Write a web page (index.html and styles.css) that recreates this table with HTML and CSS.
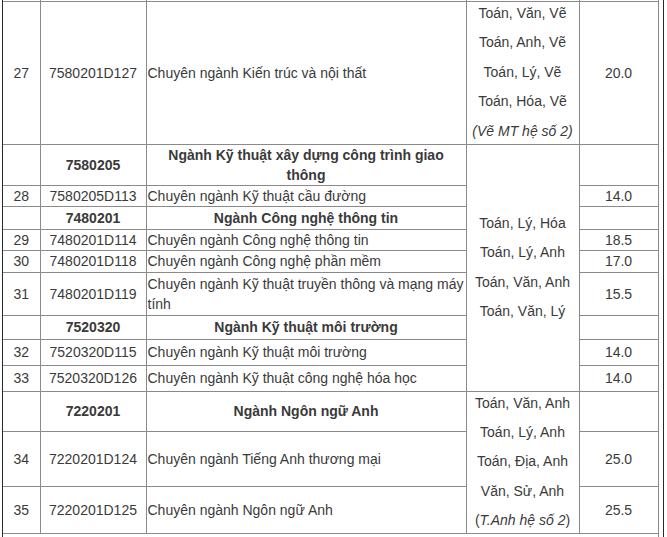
FILE: index.html
```html
<!DOCTYPE html>
<html lang="vi">
<head>
<meta charset="utf-8">
<title>Bảng điểm chuẩn</title>
<link rel="stylesheet" href="styles.css">
</head>
<body>
<div class="frame">
<table class="scores">
  <colgroup>
    <col class="c-stt"><col class="c-code"><col class="c-name"><col class="c-subj"><col class="c-score">
  </colgroup>
  <tr class="cut"><td></td><td></td><td></td><td></td><td></td></tr>
  <tr class="h143">
    <td class="ctr">27</td><td class="ctr">7580201D127</td><td class="name">Chuyên ngành Kiến trúc và nội thất</td>
    <td class="subj"><div class="lines">Toán, Văn, Vẽ<br>Toán, Anh, Vẽ<br>Toán, Lý, Vẽ<br>Toán, Hóa, Vẽ<br><i>(Vẽ MT hệ số 2)</i></div></td>
    <td class="ctr">20.0</td>
  </tr>
  <tr class="h40">
    <td></td><td class="ctr b">7580205</td><td class="ctr b">Ngành Kỹ thuật xây dựng công trình giao thông</td>
    <td class="subj" rowspan="9"><div class="lines">Toán, Lý, Hóa<br>Toán, Lý, Anh<br>Toán, Văn, Anh<br>Toán, Văn, Lý</div></td>
    <td></td>
  </tr>
  <tr class="h21">
    <td class="ctr">28</td><td class="ctr">7580205D113</td><td class="name">Chuyên ngành Kỹ thuật cầu đường</td><td class="ctr">14.0</td>
  </tr>
  <tr class="h23">
    <td></td><td class="ctr b">7480201</td><td class="ctr b">Ngành Công nghệ thông tin</td><td></td>
  </tr>
  <tr class="h21">
    <td class="ctr">29</td><td class="ctr">7480201D114</td><td class="name">Chuyên ngành Công nghệ thông tin</td><td class="ctr">18.5</td>
  </tr>
  <tr class="h22">
    <td class="ctr">30</td><td class="ctr">7480201D118</td><td class="name">Chuyên ngành Công nghệ phần mềm</td><td class="ctr">17.0</td>
  </tr>
  <tr class="h43">
    <td class="ctr">31</td><td class="ctr">7480201D119</td><td class="name">Chuyên ngành Kỹ thuật truyền thông và mạng máy tính</td><td class="ctr">15.5</td>
  </tr>
  <tr class="h24">
    <td></td><td class="ctr b">7520320</td><td class="ctr b">Ngành Kỹ thuật môi trường</td><td></td>
  </tr>
  <tr class="h26">
    <td class="ctr">32</td><td class="ctr">7520320D115</td><td class="name">Chuyên ngành Kỹ thuật môi trường</td><td class="ctr">14.0</td>
  </tr>
  <tr class="h26">
    <td class="ctr">33</td><td class="ctr">7520320D126</td><td class="name">Chuyên ngành Kỹ thuật công nghệ hóa học</td><td class="ctr">14.0</td>
  </tr>
  <tr class="h40">
    <td></td><td class="ctr b">7220201</td><td class="ctr b">Ngành Ngôn ngữ Anh</td>
    <td class="subj" rowspan="3"><div class="lines">Toán, Văn, Anh<br>Toán, Lý, Anh<br>Toán, Địa, Anh<br>Văn, Sử, Anh<br>(<i>T.Anh hệ số 2</i>)</div></td>
    <td></td>
  </tr>
  <tr class="h54">
    <td class="ctr">34</td><td class="ctr">7220201D124</td><td class="name">Chuyên ngành Tiếng Anh thương mại</td><td class="ctr">25.0</td>
  </tr>
  <tr class="h46">
    <td class="ctr">35</td><td class="ctr">7220201D125</td><td class="name">Chuyên ngành Ngôn ngữ Anh</td><td class="ctr">25.5</td>
  </tr>
  <tr>
    <td class="note" colspan="5">Đối với Điểm trúng tuyển, thí sinh xem thêm thông báo của trường.</td>
  </tr>
</table>
</div>
</body>
</html>
```

FILE: styles.css
```css
html, body {
  margin: 0;
  padding: 0;
  background: #fff;
}

body {
  font-family: "Liberation Sans", Arial, sans-serif;
  font-size: 14px;
  color: #3a3a3a;
}

.frame {
  margin-left: 2px;
  width: 660px;
  border-left: 1px solid #2a2a2a;
  border-right: 1px solid #2a2a2a;
  min-height: 600px;
}

.scores {
  border-collapse: collapse;
  table-layout: fixed;
  width: 655px;
}

.c-stt { width: 37px; }
.c-code { width: 106px; }
.c-name { width: 320px; }
.c-score { width: 79px; }
.c-subj { width: 113px; }

.scores td {
  border: 1px solid #8a8a8a;
  padding: 0 1px;
  line-height: 20px;
  vertical-align: middle;
}

.scores td:first-child {
  border-left: none;
}

.scores tr.cut td {
  height: 0;
  padding: 0;
  border-top: none;
  font-size: 0;
  line-height: 0;
}

.scores tr.cut {
  height: 1px;
}

.ctr { text-align: center; }
.b { font-weight: bold; }
.name { text-align: left; }

.subj { text-align: center; }
.lines {
  line-height: 29.4px;
  margin: -3px 0;
}

.note {
  text-align: left;
  padding-left: 6px !important;
  border-bottom: none !important;
}

.h143 { height: 143px; }
.h40 { height: 40px; }
.h21 { height: 21px; }
.h22 { height: 22px; }
.h23 { height: 23px; }
.h24 { height: 24px; }
.h26 { height: 26px; }
.h43 { height: 43px; }
.h46 { height: 46px; }
.h54 { height: 54px; }
```
